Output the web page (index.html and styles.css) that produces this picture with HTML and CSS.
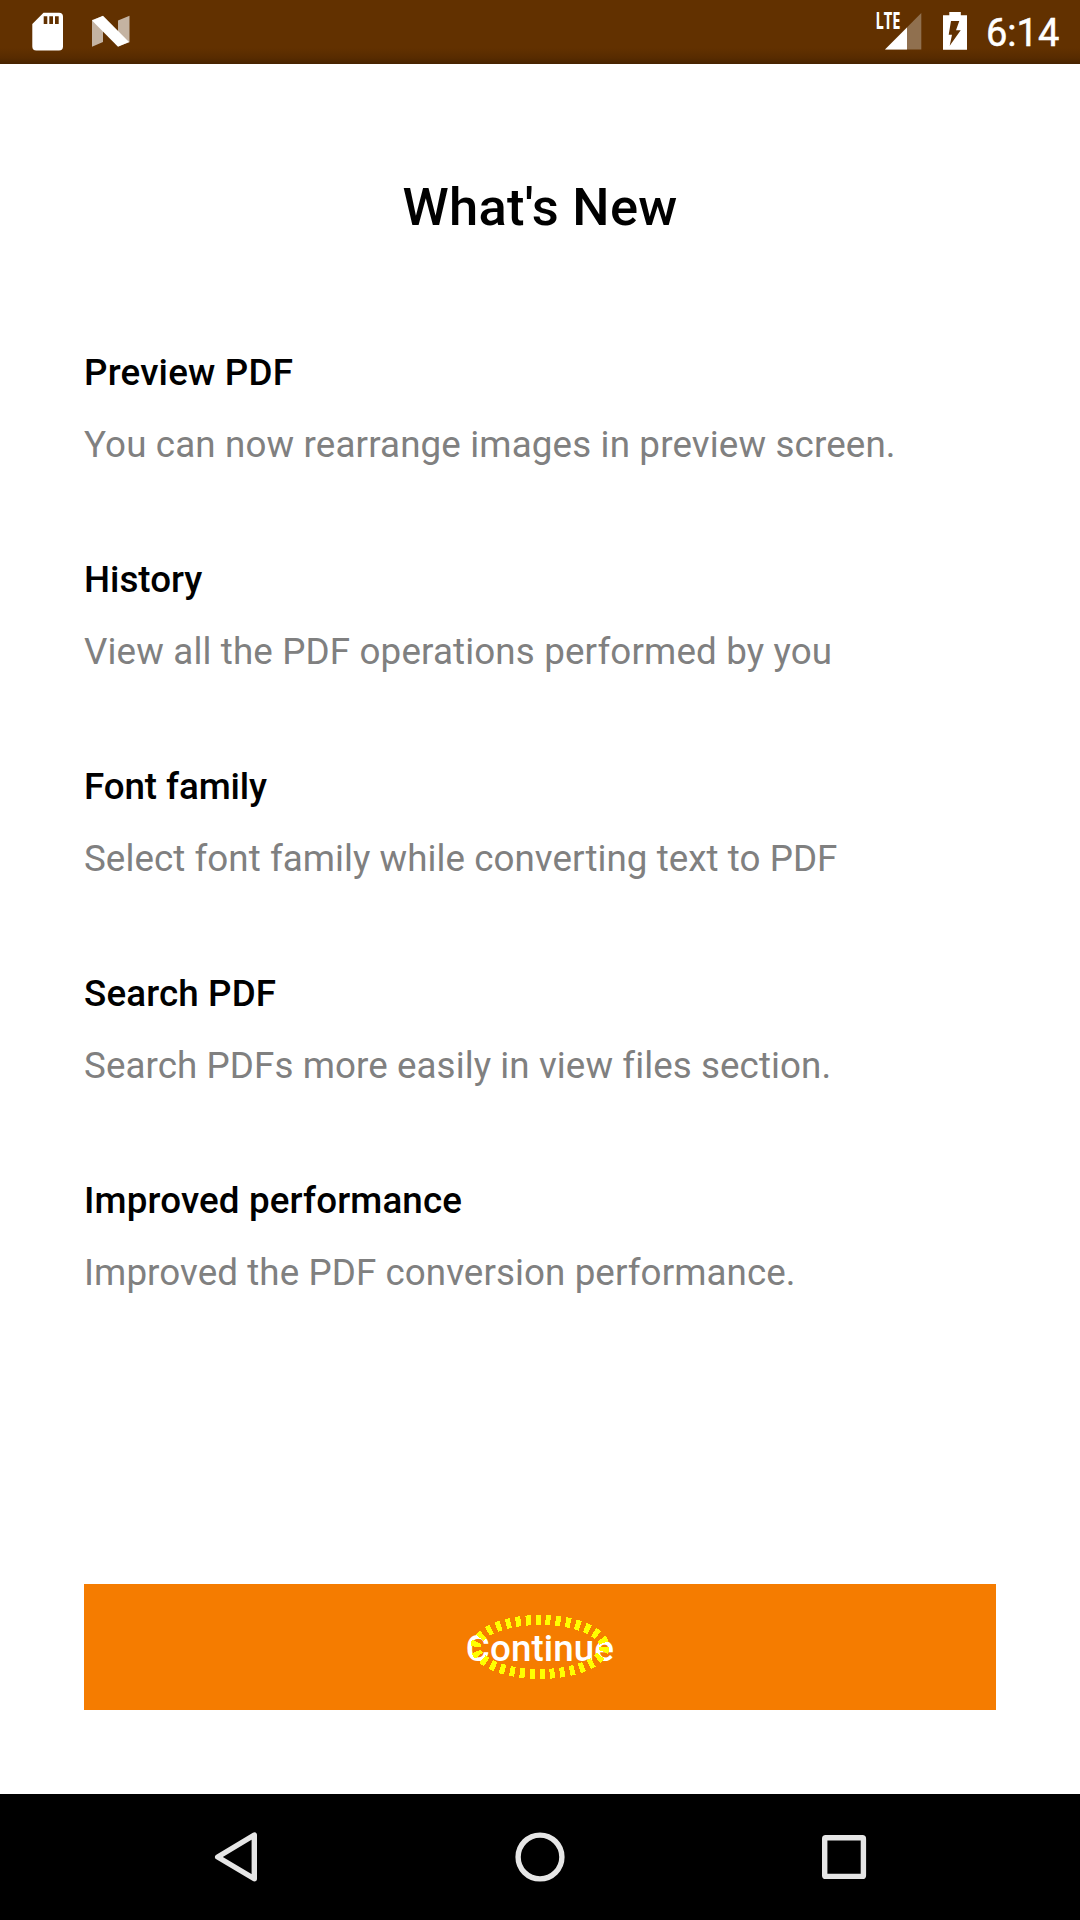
FILE: index.html
```html
<!DOCTYPE html>
<html lang="en">
<head>
<meta charset="utf-8">
<title>What's New</title>
<link rel="stylesheet" href="styles.css">
</head>
<body>
<header class="status">
<svg class="left-icons" width="200" height="63" viewBox="0 0 200 63"><path fill="#fff" fill-rule="evenodd" d="M43.500 12.700H59a4 4 0 0 1 4 4V46.500a4 4 0 0 1-4 4H36.300a4 4 0 0 1-4-4V24ZM43.700 16.300v7.700h3.600v-7.700ZM49.300 16.300v7.700h3.700v-7.700ZM55 16.300v7.700h3.700v-7.700Z"/><path fill="#c4b3a2" d="M92 20l11-4v26l-11 4.700zM118 20.500l11.500-4.700v26.500l-11.500 4z"/><path fill="#fff" d="M92 20.500L103 15.800L129 42L118 46.700Z"/></svg>
<svg class="right-icons" width="130" height="63" viewBox="850 0 130 63"><path fill="#90704f" d="M921.300 13V49.500H885Z"/><path fill="#fff" d="M907 27.500V49.500H885Z"/><path fill="#fff" fill-rule="evenodd" d="M949.300 12h11.500v3.300h6.200v34.500h-24V15.300h6.300ZM951 21L948.700 34.700H952L949.700 45.700L960.700 30.300H956L959.300 21Z"/><text class="lte" x="875.5" y="29.3" textLength="25" lengthAdjust="spacingAndGlyphs">LTE</text></svg>
<span class="clock">6:14</span>
</header>
<main class="page">
<h1 class="title">What's New</h1>
<section class="item preview"><h2>Preview PDF</h2><p>You can now rearrange images in preview screen.</p></section>
<section class="item history"><h2>History</h2><p>View all the PDF operations performed by you</p></section>
<section class="item font"><h2>Font family</h2><p>Select font family while converting text to PDF</p></section>
<section class="item search"><h2>Search PDF</h2><p>Search PDFs more easily in view files section.</p></section>
<section class="item performance"><h2>Improved performance</h2><p>Improved the PDF conversion performance.</p></section>
<button class="continue">Continue<svg class="focus" width="146" height="66" viewBox="0 0 146 66"><ellipse cx="73" cy="33" rx="64.5" ry="27" fill="none" stroke="#ff0" stroke-width="10" stroke-dasharray="5 5" shape-rendering="crispEdges"/></svg></button>
</main>
<nav class="nav"><svg width="1080" height="126" viewBox="0 1794 1080 126" fill="none" stroke="#e6e6e6" stroke-width="5.4" stroke-linejoin="round"><path d="M254.300 1835V1878.800L217.700 1857Z"/><circle cx="540" cy="1857" r="21.900"/><rect x="824.700" y="1837.700" width="38.700" height="38.700" rx="1"/></svg></nav>
</body>
</html>
```
FILE: styles.css
```css
* { box-sizing: border-box; }
body { margin: 0; width: 1080px; height: 1920px; display: flex; flex-direction: column; background: #fff; font-family: Roboto, sans-serif; }
.status { height: 64px; background: linear-gradient(#623100 0, #623100 48px, #572b00 58px, #472300 64px); display: flex; color: #fff; }
.right-icons { margin-left: 650px; }
.clock { margin-left: 6px; font-size: 38px; font-weight: 400; line-height: 66px; -webkit-text-stroke: 0.5px #fff; }
.lte { font: 700 22.5px "Open Sans", sans-serif; fill: #fff; }
.page { height: 1730px; padding: 105px 84px 84px; display: flex; flex-direction: column; }
.title { margin: 0 0 106px; text-align: center; font-size: 52.5px; line-height: 76px; font-weight: 500; letter-spacing: 0.3px; color: #000; }
.item { height: 207px; }
h2 { margin: 0; font-size: 36.75px; line-height: 43px; font-weight: 500; color: #000; }
p { margin: 29px 0 0; font-size: 36.75px; line-height: 43px; color: #808080; white-space: nowrap; }
.preview h2 { letter-spacing: 0.2px; }
.preview p, .history p { letter-spacing: 0.14px; }
.font h2 { letter-spacing: -0.1px; }
.font p { letter-spacing: 0.05px; }
.search h2, .performance h2 { letter-spacing: 0.14px; }
.search p { letter-spacing: 0.08px; }
.performance p { letter-spacing: 0.08px; }
.continue { position: relative; margin-top: auto; height: 126px; padding: 2px 0 0; border: 0; background: #f57c00; color: #fff; font: 500 36.75px Roboto, sans-serif; letter-spacing: 0.1px; }
.focus { position: absolute; left: 383px; top: 30px; }
.nav { height: 126px; background: #000; }
.nav svg { display: block; }
```
